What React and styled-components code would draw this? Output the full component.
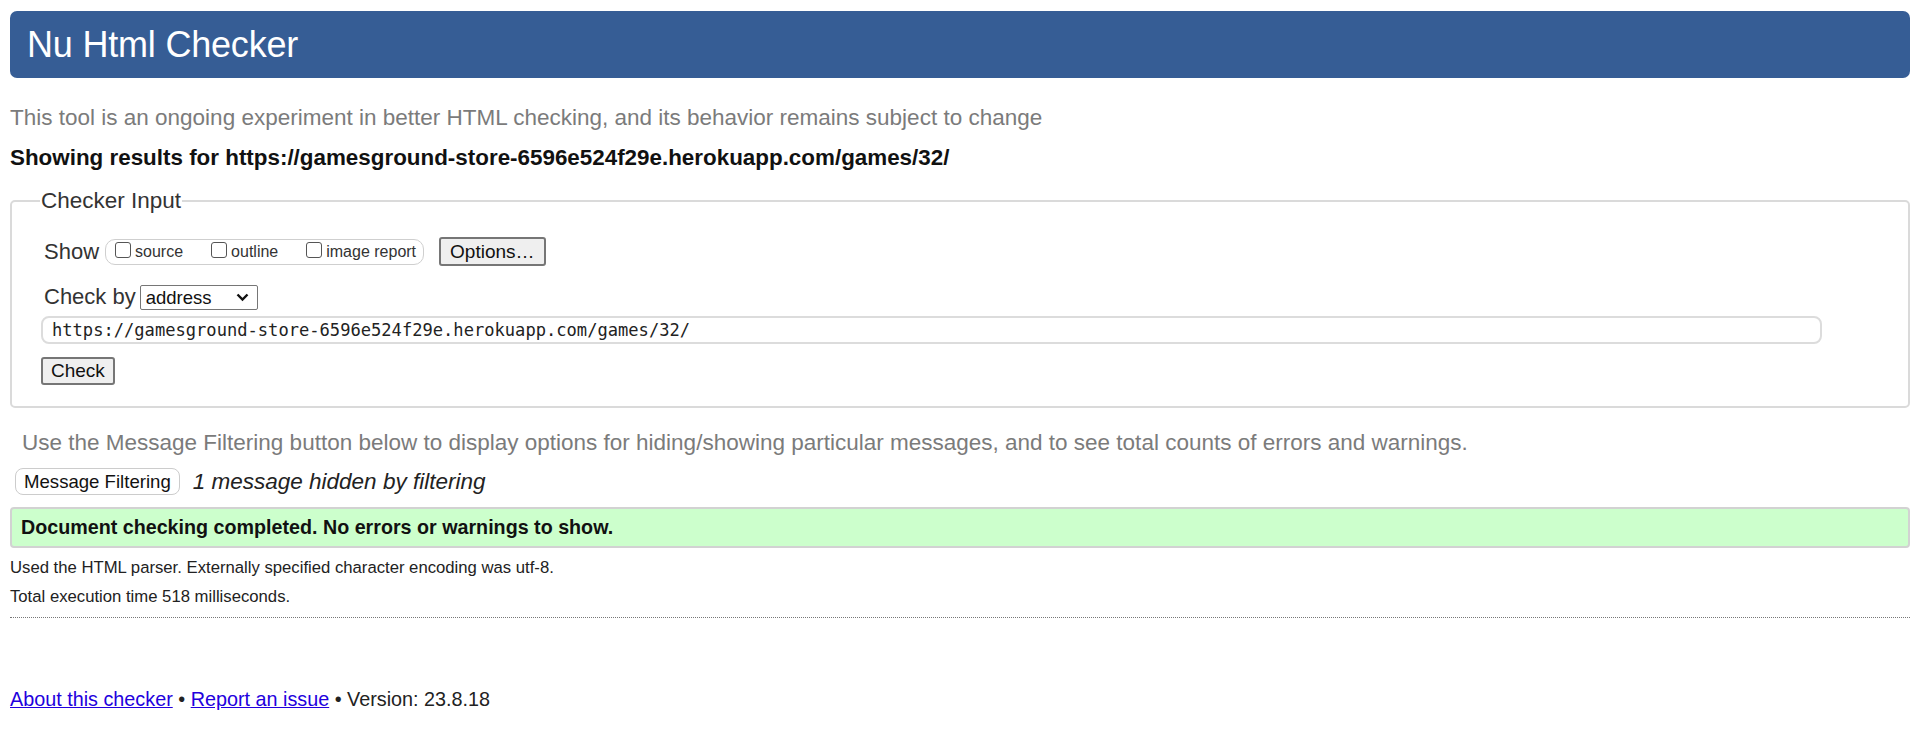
import React from 'react';
import styled, { createGlobalStyle } from 'styled-components';

const GlobalStyle = createGlobalStyle`
    html, body {
        margin: 0;
        padding: 0;
        background: #ffffff;
    }
    body {
        font-family: 'Liberation Sans', Arial, sans-serif;
        color: #222222;
    }
`;

const Page = styled.div`
    width: 1920px;
    padding: 11px 10px 0 10px;
    box-sizing: border-box;
    display: flex;
    flex-direction: column;
`;

const Header = styled.h1`
    margin: 0;
    height: 67px;
    display: flex;
    align-items: center;
    padding: 0 17px;
    background: #365d95;
    border-radius: 7px;
    color: #ffffff;
    font-weight: 400;
    font-size: 36px;
    letter-spacing: -0.2px;
`;

const Intro = styled.p`
    margin: 27px 0 0 0;
    font-size: 22.5px;
    line-height: 26px;
    color: #7b7b7b;
`;

const Results = styled.p`
    margin: 14px 0 0 0;
    font-size: 22.4px;
    line-height: 26px;
    font-weight: 700;
    color: #111111;
`;

const Fieldset = styled.fieldset`
    margin: 17px 0 0 0;
    padding: 14px 32px 21px 32px;
    border: 2px solid #dadada;
    border-radius: 5px;
    display: flex;
    flex-direction: column;
`;

const Legend = styled.legend`
    padding: 0 1px;
    margin-left: -4px;
    font-size: 22.5px;
    color: #333333;
`;

const Row = styled.div`
    display: flex;
    align-items: center;
    margin-top: ${p => p.$top || 0}px;
`;

const Label = styled.span`
    font-size: 22px;
    color: #333333;
    margin-right: ${p => p.$gap || 6}px;
`;

const CheckGroup = styled.span`
    display: flex;
    align-items: center;
    height: 24px;
    padding: 0 7px 0 9px;
    border: 1px solid #cfcfcf;
    border-radius: 10px;
    margin-right: 15px;
`;

const CheckItem = styled.label`
    display: flex;
    align-items: center;
    font-size: 16px;
    color: #333333;
    margin-right: ${p => p.$gap || 0}px;
`;

const Box = styled.input.attrs({ type: 'checkbox' })`
    appearance: none;
    width: 16px;
    height: 16px;
    margin: 0 4px 3px 0;
    border: 1px solid #555555;
    border-radius: 3px;
    background: #ffffff;
`;

const Button = styled.button`
    font-family: 'Liberation Sans', Arial, sans-serif;
    font-size: ${p => p.$size || 19}px;
    color: #111111;
    background: #efefef;
    border: 2px solid #767676;
    border-radius: 3px;
    height: ${p => p.$h || 29}px;
    padding: 0 ${p => p.$pad || 9}px;
    margin-left: ${p => p.$shift || 0}px;
`;

const SoftButton = styled.button`
    font-family: 'Liberation Sans', Arial, sans-serif;
    font-size: 18.6px;
    color: #111111;
    background: #ffffff;
    border: 1px solid #cccccc;
    border-radius: 8px;
    height: 27px;
    padding: 0 8px;
    margin-right: 13px;
`;

const SelectWrap = styled.span`
    position: relative;
    display: inline-flex;
    margin-left: 2px;
`;

const Select = styled.select`
    appearance: none;
    width: 118px;
    height: 25px;
    font-family: 'Liberation Sans', Arial, sans-serif;
    font-size: 18.5px;
    color: #111111;
    background: #ffffff;
    border: 1px solid #767676;
    border-radius: 2px;
    padding: 0 0 0 5px;
`;

const Chevron = styled.svg`
    position: absolute;
    right: 9px;
    top: 8px;
    pointer-events: none;
`;

const UrlInput = styled.input`
    width: 1781px;
    height: 28px;
    box-sizing: border-box;
    margin: 6px 0 0 -3px;
    padding: 0 9px;
    font-family: 'DejaVu Sans Mono', 'Liberation Mono', monospace;
    font-size: 17.1px;
    color: #222222;
    border: 2px solid #dcdcdc;
    border-radius: 8px;
    outline: none;
`;

const Hint = styled.p`
    margin: 22px 0 0 12px;
    font-size: 22.5px;
    line-height: 26px;
    color: #7b7b7b;
`;

const FilterRow = styled.div`
    display: flex;
    align-items: center;
    margin: 12px 0 0 5px;
`;

const Hidden = styled.em`
    font-size: 22.5px;
    color: #222222;
`;

const Success = styled.div`
    margin-top: 12px;
    height: 41px;
    box-sizing: border-box;
    display: flex;
    align-items: center;
    padding: 0 9px;
    background: #ccffcc;
    border: 2px solid #d2d2d2;
    border-radius: 4px;
    font-size: 19.7px;
    font-weight: 700;
    color: #111111;
`;

const Detail = styled.p`
    margin: ${p => p.$top || 0}px 0 0 0;
    font-size: 16.7px;
    line-height: 29px;
    color: #222222;
`;

const Divider = styled.hr`
    margin: 6px 0 0 0;
    border: 0;
    border-top: 1px dotted #777777;
`;

const Footer = styled.p`
    margin: 70px 0 0 0;
    font-size: 19.8px;
    color: #222222;
    a {
        color: #2200dd;
        text-decoration: underline;
    }
`;

const App = () => {
    return (
        <>
            <GlobalStyle />
            <Page>
                <Header>Nu Html Checker</Header>
                <Intro>This tool is an ongoing experiment in better HTML checking, and its behavior remains subject to change</Intro>
                <Results>Showing results for https://gamesground-store-6596e524f29e.herokuapp.com/games/32/</Results>
                <Fieldset>
                    <Legend>Checker Input</Legend>
                    <Row $top={9}>
                        <Label>Show</Label>
                        <CheckGroup>
                            <CheckItem $gap={28}><Box />source</CheckItem>
                            <CheckItem $gap={28}><Box />outline</CheckItem>
                            <CheckItem><Box />image report</CheckItem>
                        </CheckGroup>
                        <Button>Options…</Button>
                    </Row>
                    <Row $top={18}>
                        <Label $gap={2}>Check by</Label>
                        <SelectWrap>
                            <Select defaultValue="address">
                                <option value="address">address</option>
                                <option value="upload">file upload</option>
                                <option value="text">text input</option>
                            </Select>
                            <Chevron width="13" height="9" viewBox="0 0 13 9">
                                <path d="M1.5 1.5 L6.5 6.5 L11.5 1.5" fill="none" stroke="#111" strokeWidth="2.4" />
                            </Chevron>
                        </SelectWrap>
                    </Row>
                    <UrlInput defaultValue="https://gamesground-store-6596e524f29e.herokuapp.com/games/32/" />
                    <Row $top={13}>
                        <Button $size={19} $h={28} $pad={8} $shift={-3}>Check</Button>
                    </Row>
                </Fieldset>
                <Hint>Use the Message Filtering button below to display options for hiding/showing particular messages, and to see total counts of errors and warnings.</Hint>
                <FilterRow>
                    <SoftButton>Message Filtering</SoftButton>
                    <Hidden>1 message hidden by filtering</Hidden>
                </FilterRow>
                <Success>Document checking completed. No errors or warnings to show.</Success>
                <Detail $top={5}>Used the HTML parser. Externally specified character encoding was utf-8.</Detail>
                <Detail>Total execution time 518 milliseconds.</Detail>
                <Divider />
                <Footer>
                    <a href="#about">About this checker</a> • <a href="#issue">Report an issue</a> • Version: 23.8.18
                </Footer>
            </Page>
        </>
    );
};

export default App;
